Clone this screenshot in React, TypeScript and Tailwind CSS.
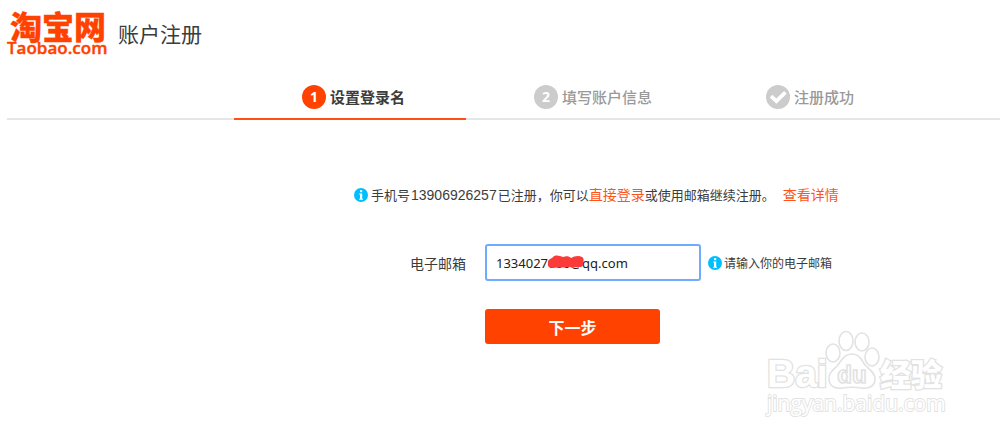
import { useState } from "react";

interface Step {
  label: string;
  mark: string;
}

const STEPS: Step[] = [
  { label: "设置登录名", mark: "1" },
  { label: "填写账户信息", mark: "2" },
  { label: "注册成功", mark: "check" },
];

function InfoIcon() {
  return (
    <svg viewBox="0 0 14 14" className="size-3.5 shrink-0" aria-hidden="true">
      <circle cx="7" cy="7" r="7" fill="#00bfff" />
      <rect x="6" y="2.2" width="2.2" height="2" fill="#fff" />
      <path d="M5.2 5.4h3v5.4h.8v1H5.2v-1H6V6.4h-.8z" fill="#fff" />
    </svg>
  );
}

function Logo() {
  return (
    <svg width="104" height="50" viewBox="0 0 104 50" role="img" aria-label="淘宝网 Taobao.com" className="shrink-0 overflow-visible">
      <g fill="#ff4200" stroke="#ff4200">
        <text x="51" y="31" fontSize="32" fontWeight="900" textAnchor="middle" strokeWidth="0.3" className="font-['Noto_Sans_CJK_SC',sans-serif]">
          淘宝网
        </text>
        <text x="0" y="46" fontSize="17" fontWeight="600" strokeWidth="0.4" className="font-['Open_Sans',sans-serif]">
          Taobao.com
        </text>
      </g>
    </svg>
  );
}

function StepMark({ mark, active }: { mark: string; active: boolean }) {
  return (
    <span
      className={`flex size-6 items-center justify-center rounded-full font-['Open_Sans',sans-serif] text-sm font-bold text-white ${
        active ? "bg-[#ff4200]" : "bg-[#cccccc]"
      }`}
    >
      {mark === "check" ? (
        <svg viewBox="0 0 24 24" className="size-6" aria-hidden="true">
          <path d="M5 11.2l5.4 5L19.4 7.4" fill="none" stroke="#fff" strokeWidth="3.8" />
        </svg>
      ) : (
        mark
      )}
    </span>
  );
}

function Watermark() {
  return (
    <svg width="184" height="90" viewBox="0 0 184 90" className="pointer-events-none absolute right-[51px] bottom-[20px]" aria-hidden="true">
      <g fill="#fff" stroke="#e2e2e2" strokeWidth="1.6">
        <g paintOrder="stroke" strokeWidth="2.6" className="font-['Liberation_Sans',sans-serif]">
          <text x="2" y="58" fontSize="39" fontWeight="700">Bai</text>
          <text x="115" y="57" fontSize="31" fontWeight="900" className="font-['Noto_Sans_CJK_SC',sans-serif]">经验</text>
          <text x="2" y="82" fontSize="21" strokeWidth="1.8" className="font-['Open_Sans',sans-serif]">jingyan.baidu.com</text>
        </g>
        <ellipse cx="68" cy="24" rx="7" ry="9" />
        <ellipse cx="81" cy="12" rx="7" ry="9.5" />
        <ellipse cx="97" cy="13" rx="7" ry="9" />
        <ellipse cx="107" cy="28" rx="7" ry="9" />
        <path d="M87 25c-8 0-10 6-15 12-5 5-9 8-8 14 1 7 7 9 13 8 7-1 13-1 20 0 7 1 13-2 13-9 0-6-5-9-10-14-4-6-6-11-13-11z" />
        <text x="87" y="54" fontSize="24" fontWeight="700" textAnchor="middle" className="font-['Liberation_Sans',sans-serif]">du</text>
      </g>
    </svg>
  );
}

export default function App() {
  const [email, setEmail] = useState("1334027000@qq.com");
  const current = 0;

  return (
    <div className="relative min-h-screen bg-white pl-[7px] font-['Noto_Sans_CJK_SC',sans-serif] text-[#3c3c3c]">
      <header className="flex items-center gap-[7px] pt-2">
        <Logo />
        <h1 className="text-[21px] leading-7">账户注册</h1>
      </header>

      <ol className="mt-6 flex border-b-2 border-[#e6e6e6] pl-[227px]">
        {STEPS.map((step, i) => (
          <li
            key={step.label}
            className={`-mb-[2px] flex w-[232px] items-start gap-1 border-b-2 pt-[3px] pb-[9px] pl-[68px] ${
              i === current ? "border-[#ff4f12] text-[#3c3c3c]" : "border-transparent text-[#999999]"
            }`}
          >
            <StepMark mark={step.mark} active={i === current} />
            <span className={`text-[15px] leading-6 ${i === current ? "font-bold" : "font-medium"}`}>{step.label}</span>
          </li>
        ))}
      </ol>

      <form className="pt-16 pl-[347px]" onSubmit={(e) => e.preventDefault()}>
        <div className="flex items-center gap-[3px] text-[13px] leading-5">
          <InfoIcon />
          <p className="whitespace-nowrap">
            手机号<span className="mx-px font-['Liberation_Sans',sans-serif] text-sm leading-5">13906926257</span>已注册，你可以
            <a href="#login" className="text-sm leading-5 text-[#ff5419]">直接登录</a>
            或使用邮箱继续注册。
            <a href="#detail" className="ml-2 text-sm leading-5 text-[#ff5419]">查看详情</a>
          </p>
        </div>

        <div className="mt-[39px] flex items-center">
          <label htmlFor="email" className="w-28 text-right text-sm">电子邮箱</label>
          {/* email box, partly scribbled over */}
          <div className="relative ml-[19px]">
            <input
              id="email"
              type="text"
              value={email}
              onChange={(e) => setEmail(e.target.value)}
              className="block h-[37px] w-[216px] rounded-[3px] border-2 border-[#70abff] bg-white px-[9px] font-['Noto_Sans',sans-serif] text-[13px] text-[#222222] outline-none"
            />
            <svg viewBox="0 0 38 14" className="pointer-events-none absolute top-[11px] left-[62px] h-3.5 w-[38px]" aria-hidden="true">
              <path d="M1 8C0 5 4 4 6 2c3-3 7-1 10 0 3-1 6-1 8 1 3-2 8-3 11-1 2 1 2 4 1 6 1 3-1 4-4 4-4 0-7 1-10 0-5 1-11 0-16 1-4 0-6-2-5-5z" fill="#fb3a3a" />
            </svg>
          </div>
          <span className="ml-[7px] flex items-center gap-0.5 text-xs">
            <InfoIcon />
            请输入你的电子邮箱
          </span>
        </div>

        <button
          type="submit"
          className="mt-7 ml-[131px] block h-[35px] w-[175px] rounded-[3px] bg-[#ff4200] text-base font-bold text-white"
        >
          下一步
        </button>
      </form>

      <Watermark />
    </div>
  );
}
